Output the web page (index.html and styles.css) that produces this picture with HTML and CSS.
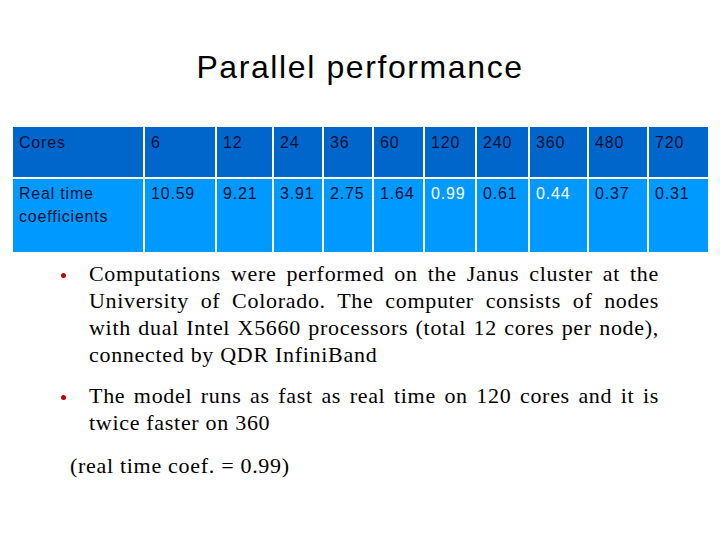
FILE: index.html
```html
<!DOCTYPE html>
<html>
<head>
<meta charset="utf-8">
<link rel="stylesheet" href="styles.css">
</head>
<body>
<div class="slide">
  <h1 class="title">Parallel performance</h1>
  <table class="perf">
    <colgroup>
      <col class="c0"><col class="c1"><col class="c2"><col class="c3"><col class="c4"><col class="c5"><col class="c6"><col class="c7"><col class="c8"><col class="c9"><col class="c10">
    </colgroup>
    <tr class="head">
      <td>Cores</td><td>6</td><td>12</td><td>24</td><td>36</td><td>60</td><td>120</td><td>240</td><td>360</td><td>480</td><td>720</td>
    </tr>
    <tr class="vals">
      <td>Real time coefficients</td><td>10.59</td><td>9.21</td><td>3.91</td><td>2.75</td><td>1.64</td><td class="hl">0.99</td><td>0.61</td><td class="hl">0.44</td><td>0.37</td><td>0.31</td>
    </tr>
  </table>
  <ul class="points">
    <li>Computations were performed on the Janus cluster at the University of Colorado. The computer consists of nodes with dual Intel X5660 processors (total 12 cores per node), connected by QDR InfiniBand</li>
    <li>The model runs as fast as real time on 120 cores and it is twice faster on 360</li>
  </ul>
  <p class="note">(real time coef. = 0.99)</p>
</div>
</body>
</html>
```
FILE: styles.css
```css
html, body {
  margin: 0;
  padding: 0;
  background: #fff;
}
.slide {
  width: 720px;
  height: 540px;
  overflow: hidden;
  display: flex;
  flex-direction: column;
}
.title {
  margin: 49px 0 0 0;
  font-family: "Liberation Sans", Arial, sans-serif;
  font-weight: normal;
  font-size: 32px;
  line-height: 37px;
  letter-spacing: 1.6px;
  text-align: center;
  color: #000;
}
.perf {
  margin: 41px 0 0 13px;
  width: 695px;
  border-collapse: collapse;
  table-layout: fixed;
  font-family: "Liberation Sans", Arial, sans-serif;
  font-size: 16px;
  line-height: 23px;
  letter-spacing: 0.8px;
  color: #0a0f33;
}
.c0 { width: 131px; }
.c1 { width: 72px; }
.c2 { width: 57px; }
.c3 { width: 50px; }
.c4 { width: 50px; }
.c5 { width: 51px; }
.c6 { width: 52px; }
.c7 { width: 53px; }
.c8 { width: 59px; }
.c9 { width: 60px; }
.c10 { width: 60px; }
.perf td {
  border-left: 2px solid #fff;
  border-right: 2px solid #fff;
  vertical-align: top;
  padding: 4px 2px 0 6px;
}
.perf tr td:first-child { border-left: none; }
.perf tr td:last-child { border-right: none; }
.head td {
  background: #0066cc;
  height: 46px;
  border-bottom: 2px solid #fff;
}
.vals td {
  background: #0099ff;
  height: 70px;
  padding-top: 3px;
}
.vals td.hl { color: #fff; }
.points {
  list-style: none;
  margin: 8px 0 0 0;
  padding: 0 61px 0 89px;
  font-family: "Liberation Serif", "Times New Roman", serif;
  font-size: 22px;
  line-height: 27px;
  letter-spacing: 0.7px;
  color: #000;
  text-align: justify;
}
.points li {
  position: relative;
  margin-bottom: 14px;
}
.points li::before {
  content: "";
  position: absolute;
  left: -28px;
  top: 13px;
  width: 5px;
  height: 5px;
  border-radius: 50%;
  background: #c00000;
}
.note {
  margin: 2px 0 0 70px;
  font-family: "Liberation Serif", "Times New Roman", serif;
  font-size: 22px;
  line-height: 27px;
  letter-spacing: 0.7px;
  color: #000;
}
```
